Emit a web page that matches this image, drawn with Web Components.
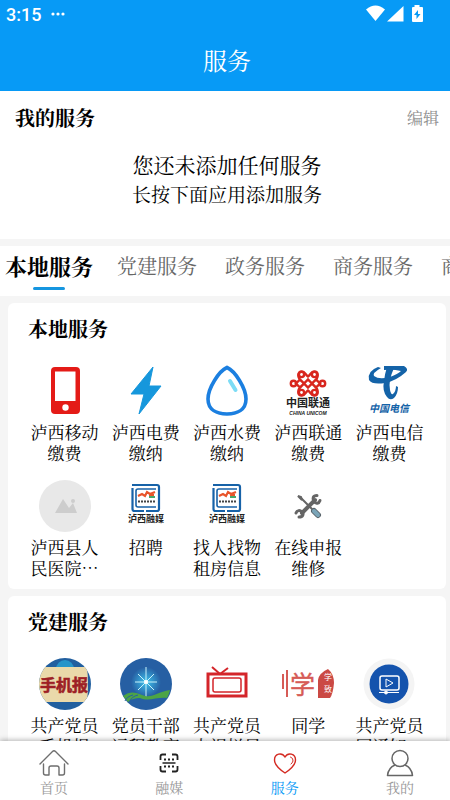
<!DOCTYPE html>
<html lang="zh-CN">
<head>
<meta charset="utf-8">
<meta name="viewport" content="width=device-width, initial-scale=1">
<title>服务</title>
<style>
  html, body {
    margin: 0;
    height: 100%;
  }
  body {
    font-family: "Noto Serif CJK SC", "Noto Sans CJK SC", serif;
    color: #000;
    background: #f5f5f5;
  }
  .art {
    font-family: "Noto Sans CJK SC", sans-serif;
    font-weight: 700;
  }
  .thin {
    font-weight: 400;
  }
</style>
</head>
<body>
<service-app>
  <status-bar slot="top" time="3:15"></status-bar>
  <page-header slot="top">服务</page-header>

  <my-services heading="我的服务" action="编辑">
    <span>您还未添加任何服务</span>
    <span slot="hint">长按下面应用添加服务</span>
  </my-services>

  <service-tabs items="本地服务,党建服务,政务服务,商务服务,商家服务"></service-tabs>

  <service-list>
    <service-card heading="本地服务">
      <service-item label="泸西移动缴费">
        <svg viewBox="0 0 52 52">
          <rect x="12" y="2" width="29" height="47" rx="4" fill="#e41b17"/>
          <path d="M16 6.500h20.500V36H16z" fill="#fff"/>
          <circle cx="26.500" cy="42.500" r="3.200" fill="#fff"/>
        </svg>
      </service-item>
      <service-item label="泸西电费缴纳">
        <svg viewBox="0 0 52 52">
          <path d="M33 2 11 29h13L19 49l22-28H29L33 2z" fill="#1697dc" stroke="#1697dc" stroke-linejoin="round"/>
        </svg>
      </service-item>
      <service-item label="泸西水费缴纳">
        <svg viewBox="0 0 52 52" fill="none" stroke-linecap="round">
          <path d="M26 2.500C18 6 7 23 7 34c0 11 9 15 19 15s19-4 19-15C45 23 34 6 26 2.500z" stroke="#1b7fe0" stroke-width="3.600"/>
          <path d="M29 16l5.500 9" stroke="#7ddcf5" stroke-width="4"/>
        </svg>
      </service-item>
      <service-item label="泸西联通缴费">
        <svg viewBox="0 0 52 52">
          <g fill="none" stroke="#d8261e" stroke-width="2.400">
            <circle cx="11.500" cy="18.500" r="2.700"/>
            <circle cx="40.500" cy="18.500" r="2.700"/>
            <path d="M14 18.500l4-4 8 8 6-6c5-4 5-10 0-10-3 0-3 3-6 5-3-2-3-5-6-5-5 0-5 6 0 10l6 6 8-8 4 4-4 4-8-8-6 6c-5 4-5 10 0 10 3 0 3-3 6-5 3 2 3 5 6 5 5 0 5-6 0-10l-6-6-8 8z"/>
            <circle cx="19.500" cy="9.500" r="2.600"/><circle cx="32.500" cy="9.500" r="2.600"/>
            <circle cx="19.500" cy="27.500" r="2.600"/><circle cx="32.500" cy="27.500" r="2.600"/>
          </g>
          <text class="art" x="26" y="42" font-size="11" text-anchor="middle" fill="#222">中国联通</text>
          <text x="26" y="50" font-family="Liberation Sans" font-style="italic" font-weight="700" font-size="5" text-anchor="middle" fill="#222">CHINA UNICOM</text>
        </svg>
      </service-item>
      <service-item label="泸西电信缴费">
        <svg viewBox="0 0 52 52" fill="#1463a8">
          <path d="M21 1h20q5 3 2 6-10 9-21 11-13 2-16-3Q4 6 15 2l3 1Q9 8 11 11q5 4 16 1 8-3 11-6-8-2-17-1z"/>
          <path d="M24 2l7 1q-6 13-4 22 1 5 3 4 3-3 3-8l2 1q0 7-4 11-4 3-7-1-5-6-3-16 1-8 3-14z"/>
          <text class="art" x="26" y="47" font-size="10" font-style="italic" text-anchor="middle">中国电信</text>
        </svg>
      </service-item>
      <service-item label="泸西县人民医院…">
        <svg viewBox="0 0 52 52">
          <circle cx="26" cy="26" r="26" fill="#e8e8e8"/>
          <path d="M16 33l8-14 6 9 4-5 4 10z" fill="#cdcdcd"/>
          <circle cx="34" cy="21" r="2" fill="#cdcdcd"/>
        </svg>
      </service-item>
      <service-item label="招聘"><rongmei-logo></rongmei-logo></service-item>
      <service-item label="找人找物租房信息"><rongmei-logo></rongmei-logo></service-item>
      <service-item label="在线申报维修">
        <svg viewBox="0 0 52 52" fill="none" stroke-linecap="round">
          <path d="M20 33l13-13" stroke="#656565" stroke-width="4"/>
          <path d="M35 15.500c-4 0-5 3-3 6s5 2 6-1" stroke="#656565" stroke-width="3"/>
          <path d="M17 37c4 0 5-3 3-5s-5-2-6 1" stroke="#656565" stroke-width="3"/>
          <path d="M18 17l14 14" stroke="#656565" stroke-width="2"/>
          <path d="M16 16l3 1 1 3z" stroke="#656565" stroke-width="2"/>
          <path d="M32 31l4 4" stroke="#59636a" stroke-width="6"/>
          <path d="M32 31l4 4" stroke="#7ba5b8" stroke-width="4"/>
        </svg>
      </service-item>
    </service-card>

    <service-card heading="党建服务">
      <service-item label="共产党员手机报">
        <svg viewBox="0 0 52 52">
          <defs>
            <clipPath id="disc"><circle cx="26" cy="26" r="26"/></clipPath>
          </defs>
          <g clip-path="url(#disc)">
            <path d="M0 0h52v52H0z" fill="#215f9f"/>
            <circle cx="26" cy="11" r="9" fill="#2795c9"/>
            <path d="M0 9h48q2 17 0 35H0z" fill="#ead9aa"/>
          </g>
          <text class="art" x="25" y="33" font-size="16" text-anchor="middle" fill="#9d1f25" stroke="#9d1f25" stroke-width=".6">手机报</text>
        </svg>
      </service-item>
      <service-item label="党员干部远程教育">
        <svg viewBox="0 0 52 52">
          <defs>
            <radialGradient id="glow"><stop stop-color="#3fc4ee"/><stop offset="1" stop-color="#265fa3"/></radialGradient>
          </defs>
          <circle cx="26" cy="26" r="26" fill="#265fa3"/>
          <circle cx="26" cy="24" r="15" fill="url(#glow)"/>
          <path d="M26 9v31M15 24h22M18 16l16 16M34 16L18 32" stroke="#c9f3fb"/>
          <circle cx="26" cy="24" r="2" fill="#fff"/>
          <path d="M3 38c7-5 12-4 19-1 10 4 14-3 28-5-1 4-2 6-3 8-11-1-18 4-27 0-5 0-9 1-12 4z" fill="#4ca446"/>
          <path d="M5 43c1-3 4-5 8-6M10 43c1-3 4-5 8-6" stroke="#265fa3" fill="none"/>
        </svg>
      </service-item>
      <service-item label="共产党员电视栏目">
        <svg viewBox="0 0 52 52" fill="none" stroke="#d4252a">
          <path d="M11 9l8 7 8-6" stroke-width="2"/>
          <rect x="7" y="16" width="38" height="22" stroke-width="3"/>
          <rect x="12" y="20" width="28" height="14" rx="2" stroke-width="1.500"/>
        </svg>
      </service-item>
      <service-item label="同学">
        <svg viewBox="0 0 52 52">
          <path d="M1 16v15M5 12v27" stroke="#d65b56" stroke-width="2"/>
          <text class="art thin" x="8" y="36" font-size="25" fill="#d65b56" stroke="#d65b56" stroke-width=".4">学</text>
          <path d="M36 40V22q1-7 10-11 6 5 6 14-1 11-4 15z" fill="#cb4944"/>
          <text class="art thin" x="42" y="22" font-size="8" fill="#fff">学</text>
          <text class="art thin" x="42" y="34" font-size="8" fill="#fff">致</text>
        </svg>
      </service-item>
      <service-item label="共产党员网通知…">
        <svg viewBox="0 0 52 52" fill="none" stroke="#fff">
          <circle cx="26" cy="26" r="25.500" fill="#f4f4f4" stroke="none"/>
          <circle cx="26" cy="26" r="19.500" fill="#1453ad" stroke="none"/>
          <rect x="17" y="18" width="19" height="14" rx="2" stroke-width="1.500"/>
          <path d="M23 21v8l7-4zM16 34.500h20"/>
          <circle cx="23" cy="34.500" r="1.500" fill="#fff"/>
        </svg>
      </service-item>
    </service-card>
  </service-list>

  <tab-bar slot="bottom">
    <tab-link label="首页">
      <svg viewBox="0 0 30 28" fill="none" stroke="#6e6e6e" stroke-width="1.400" stroke-linejoin="round" stroke-linecap="round">
        <path d="M1 15L13.500 2.500q1.500-1.500 3 0L29 15M4.500 15v9q0 2 2 2h3.500v-7q0-2 2-2h6q2 0 2 2v7h3.500q2 0 2-2v-9"/>
      </svg>
    </tab-link>
    <tab-link label="融媒">
      <svg viewBox="0 0 30 28" fill="none" stroke="#222" stroke-width="1.800">
        <path d="M6.500 11V7.500q0-2 2-2H12M18 5.500h3.500q2 0 2 2V11M6.500 17v3.500q0 2 2 2H12M18 22.500h3.500q2 0 2-2V17"/>
        <path d="M8.500 14h13" stroke-width="1.500"/>
        <path d="M10 10.500h10M10 17.500h10" stroke-dasharray="2 2"/>
      </svg>
    </tab-link>
    <tab-link label="服务" active>
      <svg viewBox="0 0 30 28" fill="none" stroke="#d42a22" stroke-width="1.400" stroke-linecap="round">
        <path d="M15 8C12 3 4.500 4.500 4.500 11c0 5 4.500 9 10.500 13 6-4 10.500-8 10.500-13C25.500 4.500 18 3 15 8z"/>
        <path d="M20.500 8q3 1 2.500 4-.5 2-2 3" stroke-width="1"/>
      </svg>
    </tab-link>
    <tab-link label="我的">
      <svg viewBox="0 0 30 28" fill="none" stroke="#666" stroke-width="1.500" stroke-linejoin="round">
        <circle cx="15" cy="9.500" r="8"/>
        <path d="M10 16C5 18 3 22 2.500 26.500h25C27 22 25 18 20 16"/>
      </svg>
    </tab-link>
  </tab-bar>
</service-app>

<script>
  function define(name, html, setup) {
    const template = document.createElement("template");
    template.innerHTML = html;

    window.customElements.define(
      name,
      class extends HTMLElement {
        constructor() {
          super()
            .attachShadow({ mode: "open" })
            .appendChild(template.content.cloneNode(true));
        }

        connectedCallback() {
          if (setup) setup(this, this.shadowRoot);
        }
      }
    );
  }

  define("service-app", `
    <style>
      :host {
        display: flex;
        flex-direction: column;
        height: 100vh;
      }
      main {
        flex: 1;
        min-height: 0;
        overflow-y: auto;
        scrollbar-width: none;
      }
    </style>
    <slot name="top"></slot>
    <main><slot></slot></main>
    <slot name="bottom"></slot>
  `);

  define("status-bar", `
    <style>
      :host {
        display: flex;
        align-items: center;
        height: 28px;
        padding: 0 26px 0 6px;
        background: #079af6;
        color: #fff;
        font: 500 18px Roboto, sans-serif;
      }
      .dots {
        flex: 1;
        margin-left: 10px;
      }
      svg {
        display: block;
      }
    </style>
    <span class="time"></span>
    <svg class="dots" height="6" fill="#fff"><circle cx="2" cy="3" r="1.600"/><circle cx="7" cy="3" r="1.600"/><circle cx="12" cy="3" r="1.600"/></svg>
    <svg width="58" height="18" viewBox="0 0 58 18" fill="#fff">
      <path d="M0 4.500q9.500-8 19 0L9.500 16z"/>
      <path d="M21 16.500L37.500 1v15.500z"/>
      <path d="M48.500 0h5v2H56q1 0 1 1v13q0 1-1 1H47q-1 0-1-1V3q0-1 1-1h1.500z"/>
      <path d="M52 5l-4 5h2.500v4l4-5H52z" fill="#079af6"/>
    </svg>
  `, (el, root) => {
    root.querySelector(".time").textContent = el.getAttribute("time");
  });

  define("page-header", `
    <style>
      :host {
        display: block;
        padding-left: 4px;
        background: #079af6;
        color: #fff;
      }
      h1 {
        margin: 0;
        font-size: 24px;
        font-weight: 400;
        line-height: 63px;
        text-align: center;
      }
    </style>
    <h1><slot></slot></h1>
  `);

  define("my-services", `
    <style>
      :host {
        display: block;
        padding: 13px 11px 30px 15px;
        background: #fff;
        text-align: center;
      }
      header {
        display: flex;
        align-items: center;
        justify-content: space-between;
        margin-bottom: 17px;
      }
      h2 {
        margin: 0;
        font-size: 20px;
        line-height: 28px;
      }
      button {
        padding: 0;
        border: none;
        background: none;
        color: #8c8c8c;
        font: inherit;
        font-size: 16px;
        line-height: 28px;
      }
      p {
        margin: 0;
        font-size: 21px;
        line-height: 30px;
      }
      .hint {
        font-size: 19px;
      }
    </style>
    <header><h2></h2><button type="button"></button></header>
    <p><slot></slot></p>
    <p class="hint"><slot name="hint"></slot></p>
  `, (el, root) => {
    root.querySelector("h2").textContent = el.getAttribute("heading");
    root.querySelector("button").textContent = el.getAttribute("action");
  });

  define("service-tabs", `
    <style>
      :host {
        display: block;
        margin-top: 7px;
        background: #fff;
      }
      nav {
        display: flex;
        gap: 28px;
        padding: 6px 9px;
        overflow-x: auto;
        scrollbar-width: none;
      }
      /* fixed width, so the larger active text grows from its centre */
      button {
        flex: none;
        display: flex;
        flex-direction: column;
        align-items: center;
        gap: 7px;
        width: 80px;
        padding: 0;
        border: none;
        background: none;
        color: #666;
        font: inherit;
        font-size: 20px;
        line-height: 28px;
        white-space: nowrap;
      }
      button::after {
        content: "";
        width: 32px;
        height: 3px;
        border-radius: 2px;
      }
      .active {
        color: #000;
        font-size: 22px;
        font-weight: 700;
      }
      .active::after {
        background: #1696e0;
      }
    </style>
    <nav></nav>
  `, (el, root) => {
    const nav = root.querySelector("nav");
    el.getAttribute("items").split(",").forEach((text, i) => {
      const button = document.createElement("button");
      button.type = "button";
      button.textContent = text;
      button.classList.toggle("active", i === 0);
      button.addEventListener("click", () => {
        nav.querySelector(".active").classList.remove("active");
        button.classList.add("active");
      });
      nav.appendChild(button);
    });
  });

  define("service-list", `
    <style>
      :host {
        display: flex;
        flex-direction: column;
        gap: 7px;
        padding: 7px 4px 7px 8px;
      }
    </style>
    <slot></slot>
  `);

  define("service-card", `
    <style>
      :host {
        display: block;
        padding: 11px 16px;
        border-radius: 6px;
        background: #fff;
      }
      h2 {
        margin: 0 4px 21px;
        font-size: 20px;
        line-height: 30px;
      }
      .grid {
        display: grid;
        grid-template-columns: repeat(5, 1fr);
        row-gap: 17px;
      }
    </style>
    <h2></h2>
    <div class="grid"><slot></slot></div>
  `, (el, root) => {
    root.querySelector("h2").textContent = el.getAttribute("heading");
  });

  define("service-item", `
    <style>
      :host {
        display: flex;
        justify-content: center;
      }
      a {
        display: flex;
        flex-direction: column;
        align-items: center;
        gap: 4px;
        color: inherit;
        text-decoration: none;
      }
      ::slotted(*) {
        display: block;
        width: 52px;
        height: 52px;
      }
      span {
        width: 70px;
        font-size: 17px;
        line-height: 21px;
        text-align: center;
        word-break: break-all;
      }
    </style>
    <a href="#"><slot></slot><span></span></a>
  `, (el, root) => {
    root.querySelector("span").textContent = el.getAttribute("label");
  });

  define("rongmei-logo", `
    <style>
      svg {
        display: block;
      }
      text {
        font: 700 9px "Noto Sans CJK SC", sans-serif;
      }
    </style>
    <svg viewBox="0 0 52 52">
      <g fill="none" stroke="#1762a8" stroke-width="2.200">
        <path d="M12 5h25q2 0 2 2v22q0 2-2 2H26"/>
        <path d="M12.500 8v21q0 2 2 2H24"/>
        <path d="M36 9H18q-2 0-2 2v14q0 2 2 2h18" stroke-width="1.600"/>
      </g>
      <path d="M18 16l4-2 3 2 2-4 3 2 5-2M29 15h5" fill="none" stroke="#e8542a" stroke-width="2.200"/>
      <path d="M29 17h6" stroke="#49a66a" stroke-width="2"/>
      <path d="M18 21.500h17" stroke="#444" stroke-width="2" stroke-dasharray="2 1"/>
      <text x="26" y="42" text-anchor="middle" fill="#222">泸西融媒</text>
    </svg>
  `);

  define("tab-bar", `
    <style>
      :host {
        display: block;
        position: relative;
        background: #fff;
        box-shadow: 0 -1px 5px rgba(0, 0, 0, 0.3);
      }
      nav {
        display: flex;
        justify-content: space-between;
        padding: 8px 20px 4px 24px;
      }
    </style>
    <nav><slot></slot></nav>
  `);

  define("tab-link", `
    <style>
      :host {
        display: block;
        width: 60px;
        color: #999;
      }
      :host([active]) {
        color: #079af6;
      }
      a {
        display: flex;
        flex-direction: column;
        align-items: center;
        gap: 1px;
        color: inherit;
        font-size: 14px;
        line-height: 18px;
        text-decoration: none;
      }
      ::slotted(svg) {
        display: block;
        width: 30px;
        height: 28px;
      }
    </style>
    <a href="#"><slot></slot><span></span></a>
  `, (el, root) => {
    root.querySelector("span").textContent = el.getAttribute("label");
  });
</script>
</body>
</html>
